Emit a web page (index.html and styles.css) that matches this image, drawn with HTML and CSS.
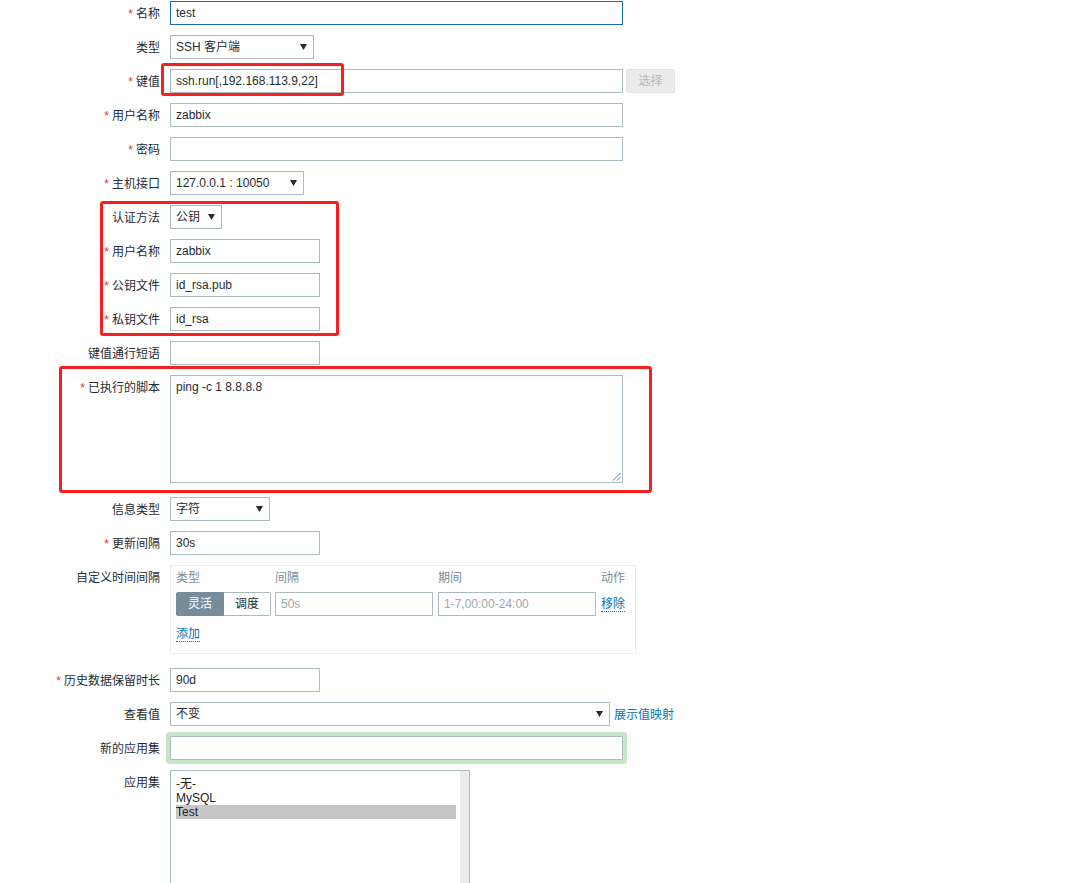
FILE: index.html
```html
<!DOCTYPE html>
<html>
<head>
<meta charset="utf-8">
<link rel="stylesheet" href="styles.css">
</head>
<body>
<div class="page">
  <div class="form">
    <div class="row">
      <div class="lbl"><span class="req">名称</span></div>
      <div class="ctl"><div class="field w453 focused">test</div></div>
    </div>
    <div class="row">
      <div class="lbl">类型</div>
      <div class="ctl"><div class="field select w144"><span>SSH 客户端</span><svg class="arrow" width="7" height="6" viewBox="0 0 7 6"><polygon points="0,0 7,0 3.5,6"/></svg></div></div>
    </div>
    <div class="row">
      <div class="lbl"><span class="req">键值</span></div>
      <div class="ctl"><div class="field w453">ssh.run[,192.168.113.9,22]</div><div class="btn-disabled">选择</div></div>
    </div>
    <div class="row">
      <div class="lbl"><span class="req">用户名称</span></div>
      <div class="ctl"><div class="field w453">zabbix</div></div>
    </div>
    <div class="row">
      <div class="lbl"><span class="req">密码</span></div>
      <div class="ctl"><div class="field w453"></div></div>
    </div>
    <div class="row">
      <div class="lbl"><span class="req">主机接口</span></div>
      <div class="ctl"><div class="field select w134"><span>127.0.0.1 : 10050</span><svg class="arrow" width="7" height="6" viewBox="0 0 7 6"><polygon points="0,0 7,0 3.5,6"/></svg></div></div>
    </div>
    <div class="row">
      <div class="lbl">认证方法</div>
      <div class="ctl"><div class="field select w52"><span>公钥</span><svg class="arrow" width="7" height="6" viewBox="0 0 7 6"><polygon points="0,0 7,0 3.5,6"/></svg></div></div>
    </div>
    <div class="row">
      <div class="lbl"><span class="req">用户名称</span></div>
      <div class="ctl"><div class="field w150">zabbix</div></div>
    </div>
    <div class="row">
      <div class="lbl"><span class="req">公钥文件</span></div>
      <div class="ctl"><div class="field w150">id_rsa.pub</div></div>
    </div>
    <div class="row">
      <div class="lbl"><span class="req">私钥文件</span></div>
      <div class="ctl"><div class="field w150">id_rsa</div></div>
    </div>
    <div class="row">
      <div class="lbl">键值通行短语</div>
      <div class="ctl"><div class="field w150"></div></div>
    </div>
    <div class="row row-tall">
      <div class="lbl"><span class="req">已执行的脚本</span></div>
      <div class="ctl">
        <div class="textarea">
          <div class="ta-text">ping -c 1 8.8.8.8</div>
          <svg class="grip" width="9" height="9" viewBox="0 0 9 9"><line x1="8.5" y1="1" x2="1" y2="8.5" stroke="#6d7a80" stroke-width="1"/><line x1="8.5" y1="5" x2="5" y2="8.5" stroke="#6d7a80" stroke-width="1"/></svg>
        </div>
      </div>
    </div>
    <div class="row">
      <div class="lbl">信息类型</div>
      <div class="ctl"><div class="field select w100"><span>字符</span><svg class="arrow" width="7" height="6" viewBox="0 0 7 6"><polygon points="0,0 7,0 3.5,6"/></svg></div></div>
    </div>
    <div class="row">
      <div class="lbl"><span class="req">更新间隔</span></div>
      <div class="ctl"><div class="field w150">30s</div></div>
    </div>
    <div class="row row-tall">
      <div class="lbl">自定义时间间隔</div>
      <div class="ctl">
        <div class="intervals">
          <div class="int-grid">
            <div class="th">类型</div>
            <div class="th">间隔</div>
            <div class="th">期间</div>
            <div class="th">动作</div>
            <div class="seg"><span class="seg-on">灵活</span><span class="seg-off">调度</span></div>
            <div class="field w158 ph">50s</div>
            <div class="field w158 ph">1-7,00:00-24:00</div>
            <div class="act"><span class="link">移除</span></div>
          </div>
          <div class="add"><span class="link">添加</span></div>
        </div>
      </div>
    </div>
    <div class="row">
      <div class="lbl"><span class="req">历史数据保留时长</span></div>
      <div class="ctl"><div class="field w150">90d</div></div>
    </div>
    <div class="row">
      <div class="lbl">查看值</div>
      <div class="ctl"><div class="field select w440"><span>不变</span><svg class="arrow" width="7" height="6" viewBox="0 0 7 6"><polygon points="0,0 7,0 3.5,6"/></svg></div><span class="link-plain">展示值映射</span></div>
    </div>
    <div class="row">
      <div class="lbl">新的应用集</div>
      <div class="ctl"><div class="field w453 glow"></div></div>
    </div>
    <div class="row">
      <div class="lbl">应用集</div>
      <div class="ctl">
        <div class="listbox">
          <div class="opts">
            <div class="opt">-无-</div>
            <div class="opt">MySQL</div>
            <div class="opt sel">Test</div>
          </div>
          <div class="track"></div>
        </div>
      </div>
    </div>
  </div>
  <div class="mark mark-key"></div>
  <div class="mark mark-auth"></div>
  <div class="mark mark-script"></div>
</div>
</body>
</html>
```

FILE: styles.css
```css
html, body {
  margin: 0;
  padding: 0;
  background: #ffffff;
  overflow: hidden;
}
body {
  font-family: "Liberation Sans", "Noto Sans CJK SC", Arial, sans-serif;
  font-size: 12px;
  color: #1f2c33;
}
.page {
  position: relative;
  padding-top: 1px;
}
.form {
  display: flex;
  flex-direction: column;
  gap: 10px;
}
.row {
  display: grid;
  grid-template-columns: 160px auto;
  column-gap: 10px;
  align-items: start;
}
.row-tall {
  margin-bottom: 4px;
}
.lbl {
  text-align: right;
  line-height: 24px;
  padding-top: 1px;
  height: 23px;
  white-space: nowrap;
}
.req::before {
  content: "*";
  color: #e33734;
  padding-right: 3px;
}
.ctl {
  display: flex;
  align-items: center;
}
.field {
  box-sizing: border-box;
  height: 24px;
  border: 1px solid #acbbc2;
  padding: 0 5px;
  line-height: 22px;
  background: #ffffff;
  white-space: nowrap;
  overflow: hidden;
}
.focused {
  border-color: #1a6ca6;
}
.w453 { width: 453px; }
.w440 { width: 440px; }
.w150 { width: 150px; }
.w158 { width: 158px; }
.w144 { width: 144px; }
.w134 { width: 134px; }
.w100 { width: 100px; }
.w52 { width: 52px; }
.select {
  display: flex;
  align-items: center;
  justify-content: space-between;
  padding: 0 6px 0 5px;
}
.arrow {
  fill: #1f2c33;
  flex: none;
  margin-left: 4px;
}
.btn-disabled {
  box-sizing: border-box;
  width: 49px;
  height: 24px;
  margin-left: 3px;
  border: 1px solid #dfe4e7;
  border-radius: 2px;
  background: #ebebeb;
  color: #acbbc2;
  line-height: 22px;
  text-align: center;
}
.textarea {
  box-sizing: border-box;
  width: 453px;
  height: 108px;
  border: 1px solid #acbbc2;
  padding: 4px 5px 1px;
  display: flex;
  flex-direction: column;
}
.ta-text {
  line-height: 14px;
}
.grip {
  margin-top: auto;
  align-self: flex-end;
  margin-right: -4px;
}
.intervals {
  box-sizing: border-box;
  width: 466px;
  height: 89px;
  border: 1px solid #ebeef0;
  padding: 5px 8px 0 5px;
}
.int-grid {
  display: grid;
  grid-template-columns: 99px 163px 163px auto;
  row-gap: 7px;
  align-items: center;
}
.th {
  color: #768d99;
  line-height: 14px;
}
.seg {
  display: flex;
  width: 95px;
  height: 24px;
}
.seg-on, .seg-off {
  box-sizing: border-box;
  height: 24px;
  line-height: 22px;
  text-align: center;
}
.seg-on {
  width: 48px;
  background: #768d99;
  border: 1px solid #768d99;
  color: #ffffff;
  border-radius: 2px 0 0 2px;
}
.seg-off {
  width: 47px;
  border: 1px solid #acbbc2;
  border-left: none;
  border-radius: 0 2px 2px 0;
  color: #1f2c33;
}
.ph {
  color: #9da8ae;
}
.link {
  color: #0275b8;
  border-bottom: 1px dotted #0275b8;
  line-height: 14px;
}
.add {
  margin-top: 11px;
  line-height: 14px;
}
.link-plain {
  color: #0275b8;
  margin-left: 4px;
  padding-top: 2px;
  line-height: 14px;
}
.glow {
  box-shadow: 0 0 0 4px #c8e5c9;
  border-radius: 1px;
}
.listbox {
  box-sizing: border-box;
  width: 300px;
  height: 160px;
  border: 1px solid #acbbc2;
  display: flex;
}
.opts {
  flex: 1;
  padding: 6px 4px 0 5px;
}
.opt {
  line-height: 14px;
  height: 14px;
  color: #222222;
  white-space: nowrap;
}
.opt.sel {
  background: #c6c6c6;
}
.track {
  width: 9px;
  background: #ebebeb;
}
.mark {
  position: absolute;
  box-sizing: border-box;
  border: 3px solid #fa1f1f;
  border-radius: 3px;
}
.mark-key {
  left: 161px;
  top: 63px;
  width: 183px;
  height: 33px;
}
.mark-auth {
  left: 100px;
  top: 201px;
  width: 239px;
  height: 135px;
}
.mark-script {
  left: 59px;
  top: 366px;
  width: 593px;
  height: 127px;
}
```
